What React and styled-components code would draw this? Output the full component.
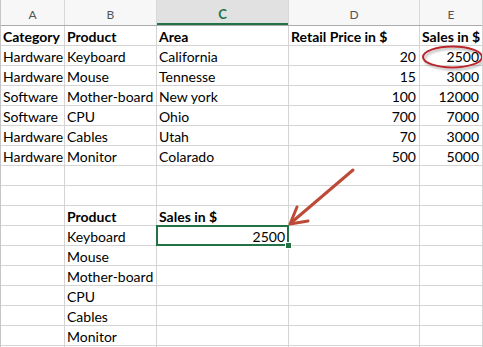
import React from 'react';
import styled, { createGlobalStyle, css } from 'styled-components';

const GlobalStyle = createGlobalStyle`
  html, body {
    margin: 0;
    padding: 0;
    background: #fff;
    overflow: hidden;
  }
  body {
    font-family: Lato, "Liberation Sans", Arial, sans-serif;
  }
`;

const green = '#217346';
const cols = '63px 91px 131px 130px 62px';

const Sheet = styled.div`
  position: relative;
  width: 483px;
  height: 347px;
  overflow: hidden;
  box-sizing: border-box;
  border-left: 1px solid #c6c6c6;
  border-right: 1px solid #d4d4d4;
`;

const HeaderRow = styled.div`
  display: grid;
  grid-template-columns: ${cols};
  grid-template-rows: 25px;
  column-gap: 1px;
  background: #d8d8d8;
  border-bottom: 1px solid #ababab;
`;

const ColHead = styled.div`
  background: #f7f7f7;
  color: #555;
  font-size: 12px;
  text-align: center;
  line-height: 12px;
  padding-top: 9px;
  box-sizing: border-box;
  ${({ $active }) =>
    $active &&
    css`
      background: #e1e1e1;
      color: ${green};
      font-weight: bold;
      font-size: 13px;
      padding-top: 8px;
      box-shadow: inset 0 -2px 0 ${green};
    `}
`;

const Body = styled.div`
  display: grid;
  grid-template-columns: ${cols};
  grid-auto-rows: 19px;
  gap: 1px;
  background: #d4d4d4;
`;

const Cell = styled.div`
  position: relative;
  background: #fff;
  color: #000;
  font-size: 14px;
  line-height: 20px;
  padding: 1px 2px 0 2px;
  box-sizing: border-box;
  white-space: nowrap;
  font-weight: ${({ $bold }) => ($bold ? 'bold' : 'normal')};
  text-align: ${({ $num }) => ($num ? 'right' : 'left')};
  ${({ $num }) => $num && css`padding-right: 3px;`}
  ${({ $rowActive }) =>
    $rowActive &&
    css`
      box-shadow: -1px 0 0 ${green};
    `}
  ${({ $selected }) =>
    $selected &&
    css`
      z-index: 1;
      box-shadow: 0 0 0 1px ${green}, inset 0 0 0 1px ${green};
      &::after {
        content: '';
        position: absolute;
        right: -4px;
        bottom: -4px;
        width: 5px;
        height: 5px;
        background: ${green};
        border: 1px solid #fff;
      }
    `}
`;

const Overlay = styled.svg`
  position: absolute;
  left: -1px;
  top: 0;
  pointer-events: none;
  z-index: 2;
`;

const letters = ['A', 'B', 'C', 'D', 'E'];

const rows = [
  [{ t: 'Category', b: 1 }, { t: 'Product', b: 1 }, { t: 'Area', b: 1 }, { t: 'Retail Price in $', b: 1 }, { t: 'Sales in $', b: 1 }],
  ['Hardware', 'Keyboard', 'California', 20, 2500],
  ['Hardware', 'Mouse', 'Tennesse', 15, 3000],
  ['Software', 'Mother-board', 'New york', 100, 12000],
  ['Software', 'CPU', 'Ohio', 700, 7000],
  ['Hardware', 'Cables', 'Utah', 70, 3000],
  ['Hardware', 'Monitor', 'Colarado', 500, 5000],
  [],
  [],
  ['', { t: 'Product', b: 1 }, { t: 'Sales in $', b: 1 }],
  ['', 'Keyboard', { t: 2500, sel: 1 }],
  ['', 'Mouse'],
  ['', 'Mother-board'],
  ['', 'CPU'],
  ['', 'Cables'],
  ['', 'Monitor'],
  [],
];

const App = () => {
  return (
    <>
      <GlobalStyle />
      <Sheet>
        <HeaderRow>
          {letters.map((l) => (
            <ColHead key={l} $active={l === 'C'}>{l}</ColHead>
          ))}
        </HeaderRow>
        <Body>
          {rows.map((row, r) =>
            letters.map((_, c) => {
              const raw = row[c];
              const v = raw && typeof raw === 'object' ? raw : { t: raw };
              const isNum = typeof v.t === 'number';
              return (
                <Cell
                  key={r + '-' + c}
                  $bold={v.b}
                  $num={isNum}
                  $selected={v.sel}
                  $rowActive={c === 0 && r === 10}
                >
                  {v.t}
                </Cell>
              );
            })
          )}
        </Body>
        <Overlay width="483" height="347" viewBox="0 0 483 347">
          <defs>
            <filter id="shade" x="-20%" y="-40%" width="140%" height="180%">
              <feDropShadow dx="1.5" dy="2" stdDeviation="1.2" floodColor="#000" floodOpacity="0.3" />
            </filter>
          </defs>
          <ellipse cx="452.5" cy="57" rx="29.5" ry="10.5" fill="none" stroke="#b8262c" strokeWidth="2" filter="url(#shade)" />
          <line x1="353" y1="170" x2="292" y2="222" stroke="#bd4a36" strokeWidth="3" strokeLinecap="round" />
          <polyline points="297,207 290,224 308,221" fill="none" stroke="#bd4a36" strokeWidth="3" strokeLinecap="round" strokeLinejoin="round" />
        </Overlay>
      </Sheet>
    </>
  );
};

export default App;
